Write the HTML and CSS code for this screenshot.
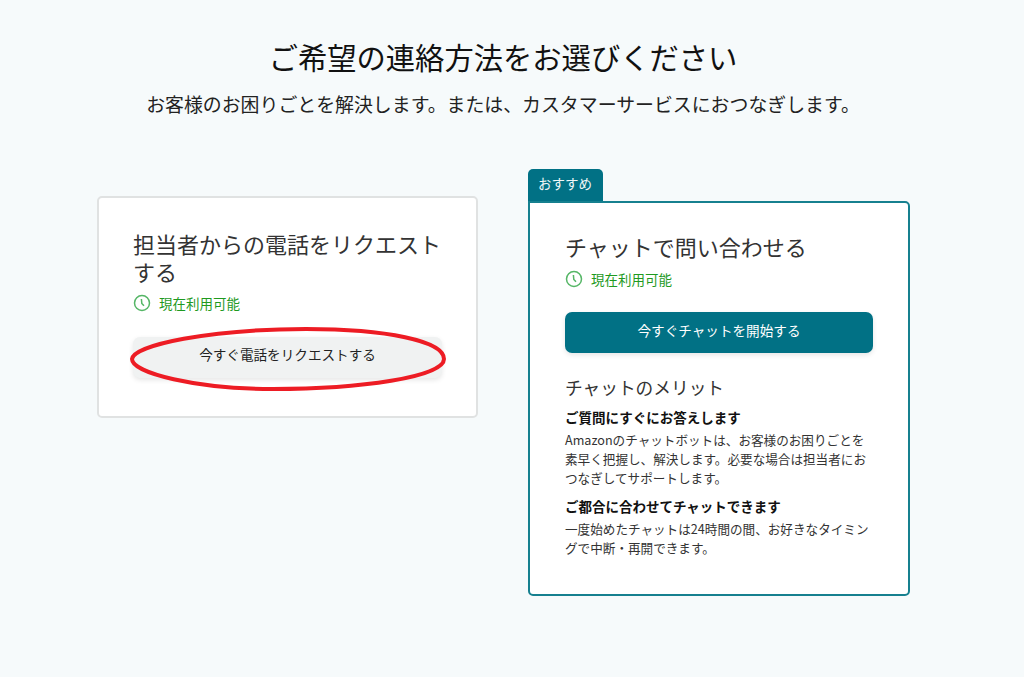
FILE: index.html
```html
<!DOCTYPE html>
<html lang="ja">
<head>
    <meta charset="UTF-8">
    <title>ご希望の連絡方法をお選びください</title>
    <link rel="stylesheet" href="styles.css">
</head>
<body>
    <header class="page-header">
        <h1>ご希望の連絡方法をお選びください</h1>
        <p>お客様のお困りごとを解決します。または、カスタマーサービスにおつなぎします。</p>
    </header>
    <main class="options">
        <section class="card card-phone">
            <h2>担当者からの電話をリクエスト<br>する</h2>
            <div class="status">
                <svg class="clock" viewBox="0 0 18 18" width="18" height="18"><circle cx="9" cy="9" r="7.5"/><path d="M8.4 5 L8.8 9.4 L11 11.8"/></svg>
                <span>現在利用可能</span>
            </div>
            <div class="button-wrap">
                <button class="btn btn-grey">今すぐ電話をリクエストする</button>
                <svg class="circled" viewBox="0 0 316 64" width="316" height="64"><path d="M2 32 C4 18 80 2 176 2 C256 2 314 14 314 32 C314 50 230 62 143 62 C66 62 2 46 2 32 Z"/></svg>
            </div>
        </section>
        <div class="recommended">
            <div class="tab">おすすめ</div>
            <section class="card card-chat">
                <h2>チャットで問い合わせる</h2>
                <div class="status">
                    <svg class="clock" viewBox="0 0 18 18" width="18" height="18"><circle cx="9" cy="9" r="7.5"/><path d="M8.4 5 L8.8 9.4 L11 11.8"/></svg>
                    <span>現在利用可能</span>
                </div>
                <button class="btn btn-teal">今すぐチャットを開始する</button>
                <h3>チャットのメリット</h3>
                <h4>ご質問にすぐにお答えします</h4>
                <p>Amazonのチャットボットは、お客様のお困りごとを素早く把握し、解決します。必要な場合は担当者におつなぎしてサポートします。</p>
                <h4>ご都合に合わせてチャットできます</h4>
                <p>一度始めたチャットは24時間の間、お好きなタイミングで中断・再開できます。</p>
            </section>
        </div>
    </main>
</body>
</html>
```
FILE: styles.css
```css
body {
    margin: 0;
    height: 677px;
    overflow: hidden;
    background-color: #f6fafb;
    color: #111;
    font-family: "Noto Sans CJK JP", "Liberation Sans", sans-serif;
}
.page-header {
    padding-top: 34px;
    padding-right: 18px;
    text-align: center;
}
.page-header h1 {
    margin: 0;
    font-size: 29.3px;
    line-height: 44px;
    font-weight: 400;
}
.page-header p {
    margin: 11px 0 0;
    font-size: 18.9px;
    line-height: 30px;
    color: #222;
}
.options {
    display: flex;
    align-items: flex-start;
    gap: 50px;
    padding: 50px 0 0 97px;
}
.card {
    box-sizing: border-box;
    background: #fff;
    border-radius: 5px;
}
.card-phone {
    width: 381px;
    height: 222px;
    margin-top: 27px;
    padding: 31px 34px 0 34px;
    border: 2px solid #e0e2e2;
}
.card-chat {
    width: 382px;
    height: 395px;
    padding: 29px 35px 0 35px;
    border: 2px solid #16808f;
    border-top-left-radius: 0;
}
h2 {
    margin: 0;
    font-size: 22px;
    line-height: 28px;
    font-weight: 400;
    white-space: nowrap;
    color: #333;
}
.status {
    display: flex;
    align-items: center;
    gap: 8px;
    margin-top: 8px;
    font-size: 13.5px;
    line-height: 20px;
    color: #1f9a1f;
}
.card-chat .status {
    margin-top: 9px;
}
.clock {
    fill: none;
    stroke: #55b666;
    stroke-width: 1.5;
}
.btn {
    display: block;
    width: 100%;
    height: 41px;
    border: none;
    border-radius: 7px;
    font-family: inherit;
    font-size: 13.6px;
    box-shadow: 0 2px 5px rgba(0, 0, 0, 0.1);
}
.btn-grey {
    padding-bottom: 8px;
    background: #f0f2f2;
    color: #222;
}
.btn-teal {
    margin-top: 23px;
    padding-bottom: 6px;
    background: #017185;
    color: #fff;
}
.button-wrap {
    position: relative;
    margin-top: 24px;
}
.circled {
    position: absolute;
    left: -3px;
    top: -10px;
    fill: none;
    stroke: #ed1c24;
    stroke-width: 4;
}
.tab {
    box-sizing: border-box;
    width: 75px;
    height: 32px;
    padding-left: 10px;
    border-radius: 5px 5px 0 0;
    background: #017185;
    color: #eef6f7;
    font-size: 13.5px;
    line-height: 28px;
}
h3 {
    margin: 21px 0 0;
    font-size: 17.7px;
    line-height: 26px;
    font-weight: 400;
    color: #333;
}
h4 {
    margin: 7px 0 3px;
    font-size: 13.5px;
    line-height: 20px;
    font-weight: 700;
}
.card-chat p {
    margin: 0 0 9px;
    font-size: 12.6px;
    line-height: 19px;
    color: #333;
}
```
